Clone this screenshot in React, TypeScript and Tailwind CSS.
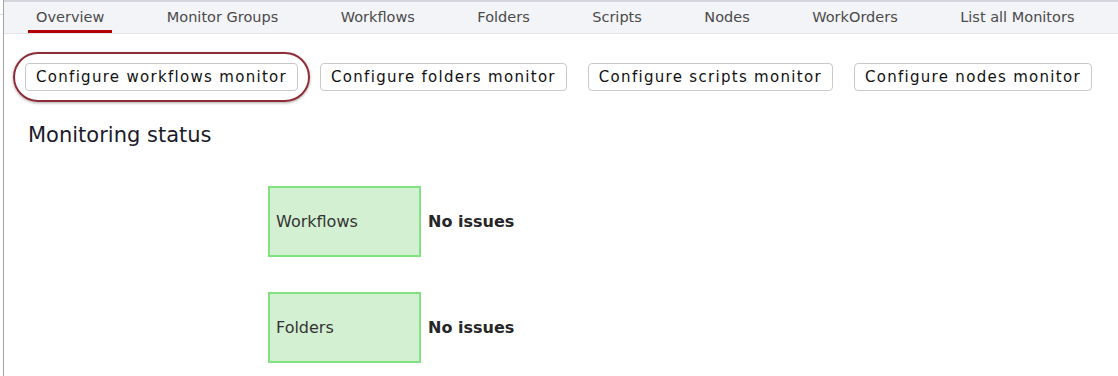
import React from "react";

// tabs in the header strip
const tabs = [
  "Overview",
  "Monitor Groups",
  "Workflows",
  "Folders",
  "Scripts",
  "Nodes",
  "WorkOrders",
  "List all Monitors",
];

const buttons = [
  "Configure workflows monitor",
  "Configure folders monitor",
  "Configure scripts monitor",
  "Configure nodes monitor",
];

const statuses = [
  { name: "Workflows", state: "No issues" },
  { name: "Folders", state: "No issues" },
];

const App = () => {
  return (
    <div
      className="flex w-[1118px] h-[376px] overflow-hidden bg-white text-[#222]"
      style={{ fontFamily: '"DejaVu Sans", Verdana, sans-serif' }}
    >
      {/* left edge of the frame */}
      <div className="w-[4px] h-full bg-white border-r border-[#a3a3a3] flex flex-col">
        <div className="h-[14px]" />
        <div className="h-px w-[3px] bg-[#dcdcdc]" />
      </div>

      <div className="flex-1 flex flex-col border-t-2 border-[#d3d6dd]">
        {/* tab bar */}
        <div className="h-[32px] bg-[#f3f4f8] border-b border-[#e3e5ea] flex items-stretch pl-[24px] gap-[46.5px]">
          {tabs.map((t, i) => (
            <div
              key={t}
              className={
                "px-[8px] flex items-center text-[14.5px] text-[#4a4a4a] border-b-[3px] " +
                (i === 0 ? "border-[#b30000]" : "border-transparent")
              }
            >
              <span className="pt-[3px]">{t}</span>
            </div>
          ))}
        </div>

        {/* configure buttons */}
        <div className="flex items-center pl-[21px] mt-[29px] gap-[21px]">
          {buttons.map((b, i) => (
            <div
              key={b}
              className={
                i === 0
                  ? "rounded-full border-2 border-[#8e2c38] shadow-[0_1px_3px_rgba(0,0,0,0.35)] px-[10px] py-[9px] -ml-[12px] -mr-[11px] -my-[11px]"
                  : ""
              }
            >
              <button className="h-[28px] px-[10px] rounded-[4px] border border-[#c9c9c9] bg-white text-[15px] tracking-[1.3px] text-[#111] leading-none whitespace-nowrap">
                {b}
              </button>
            </div>
          ))}
        </div>

        <h2 className="ml-[24px] mt-[30px] text-[21px] leading-[28px] text-[#1b1b2b]">
          Monitoring status
        </h2>

        {/* status table */}
        <div className="flex flex-col ml-[264px] mt-[37px] gap-[35px]">
          {statuses.map((s) => (
            <div key={s.name} className="flex items-center">
              <div className="w-[153px] h-[71px] bg-[#d3f0d3] border-2 border-[#80e380] flex items-center pl-[6px] text-[16px] text-[#333]">
                {s.name}
              </div>
              <div className="ml-[7px] pt-px text-[16px] font-bold text-[#262626]">
                {s.state}
              </div>
            </div>
          ))}
        </div>
      </div>
    </div>
  );
};

export default App;
